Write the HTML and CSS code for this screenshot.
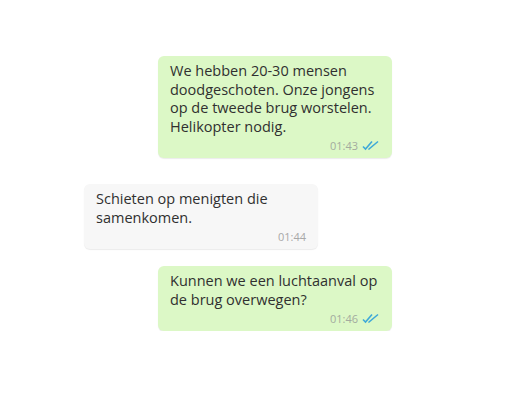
FILE: index.html
```html
<!DOCTYPE html>
<html>
<head>
  <meta charset="utf-8">
  <title>Chat</title>
  <link rel="stylesheet" href="styles.css">
</head>
<body>
  <div class="chat">
    <div class="msg out first">
      <p>We hebben 20-30 mensen doodgeschoten. Onze jongens op de tweede brug worstelen. Helikopter nodig.</p>
      <div class="meta">
        <span class="time">01:43</span>
        <svg class="ticks" width="18" height="11" viewBox="0 0 18 11">
          <path d="M1 6.5 L3.5 9 L10 1.5 M6.5 8.5 L7 9 L16 1.5" fill="none" stroke="#3fa9d8" stroke-width="1.6"/>
        </svg>
      </div>
    </div>

    <div class="msg in">
      <p>Schieten op menigten die samenkomen.</p>
      <div class="meta">
        <span class="time">01:44</span>
      </div>
    </div>

    <div class="msg out last">
      <p>Kunnen we een luchtaanval op de brug overwegen?</p>
      <div class="meta">
        <span class="time">01:46</span>
        <svg class="ticks" width="18" height="11" viewBox="0 0 18 11">
          <path d="M1 6.5 L3.5 9 L10 1.5 M6.5 8.5 L7 9 L16 1.5" fill="none" stroke="#3fa9d8" stroke-width="1.6"/>
        </svg>
      </div>
    </div>
  </div>
</body>
</html>
```

FILE: styles.css
```css
body {
  margin: 0;
  background: #fff;
  font-family: "Open Sans", "Noto Sans", sans-serif;
}

.chat {
  display: flex;
  flex-direction: column;
  padding: 56px 0 0;
}

.msg {
  width: 234px;
  box-sizing: border-box;
  padding: 6px 12px 6px 12px;
  border-radius: 6px;
  box-shadow: 0 1px 1px rgba(0, 0, 0, 0.08);
  color: #303030;
}

.msg p {
  margin: 0;
  font-size: 14.5px;
  line-height: 18.5px;
}

.msg.out {
  margin-left: 158px;
  background: #dcf8c6;
}

.msg.in {
  margin-left: 84px;
  margin-top: 26px;
  background: #f7f7f7;
}

.msg.last {
  margin-top: 17px;
}

.meta {
  display: flex;
  justify-content: flex-end;
  align-items: center;
  gap: 4px;
  margin-top: 2px;
  height: 14px;
}

.time {
  font-size: 11px;
  color: #a3ab9f;
}

.msg.in .time {
  color: #a8a8a8;
}
```
